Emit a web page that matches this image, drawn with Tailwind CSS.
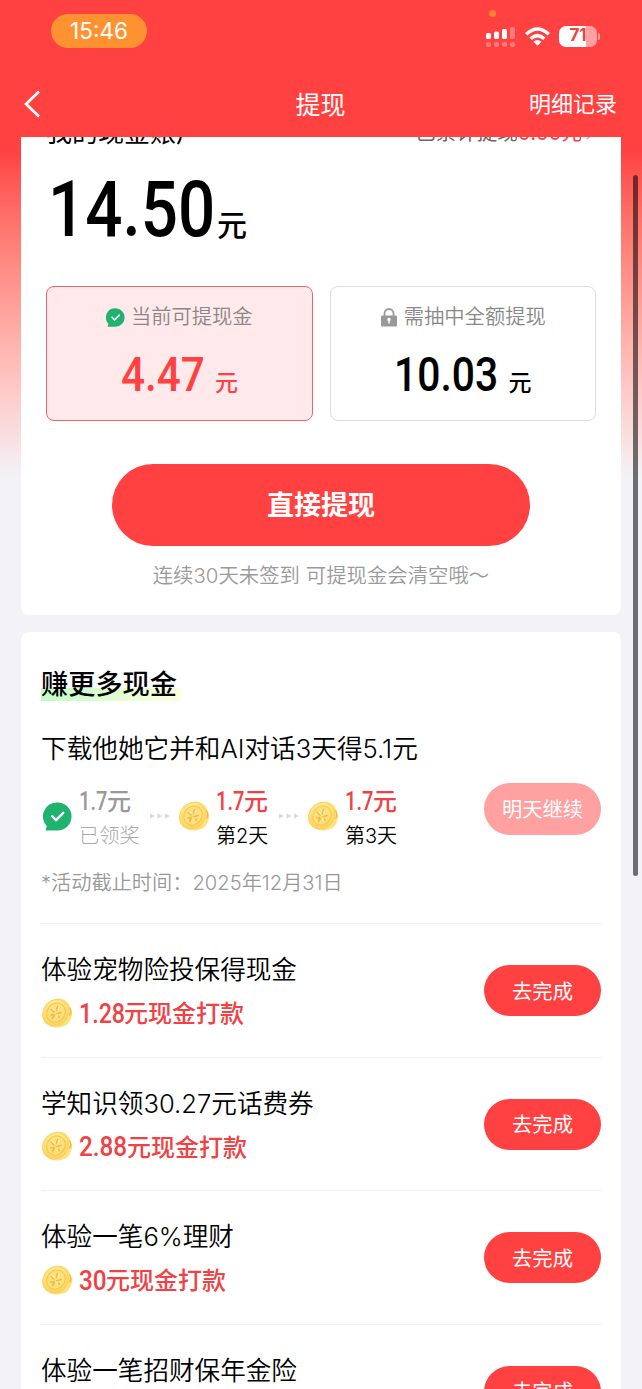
<!DOCTYPE html>
<html lang="zh-CN">
<head>
<meta charset="utf-8">
<meta name="viewport" content="width=device-width">
<title>提现</title>
<script src="https://cdn.jsdelivr.net/npm/@tailwindcss/browser@4"></script>
</head>
<body class="h-[1389px] w-[642px] overflow-hidden bg-[#f3f2f7] font-['Inter','Noto_Sans_CJK_SC',sans-serif] text-black">
<svg class="absolute size-0" aria-hidden="true">
  <defs>
    <linearGradient id="gold" x1="0" y1="0" x2="1" y2="1"><stop offset="0" stop-color="#fff0a4"/><stop offset=".5" stop-color="#ffdc6c"/><stop offset="1" stop-color="#f9cf5b"/></linearGradient>
    <symbol id="coin" viewBox="0 0 32 32">
      <path d="M10 4C16-.5 24 1 28 7c1 2 .8 3 2.200 5.500C32.500 17 30 21 29 24 26 28 24 29 20 30 12 32 5 28 2 22Z" fill="#ffe07a"/>
      <path d="M28.500 10.500q2.500 4 0 8" stroke="#eebb45" stroke-width="1.400" fill="none"/>
      <ellipse cx="14.500" cy="15.800" rx="12.300" ry="13.800" transform="rotate(38 14.500 15.800)" fill="url(#gold)" stroke="#f9d160" stroke-width="1"/>
      <ellipse cx="15" cy="15.500" rx="8.800" ry="10" transform="rotate(38 15 15.500)" fill="#ffe07c" stroke="#f3c552" stroke-width="1"/>
      <path d="m10.500 12.500 2.500 2.500m3.500-5.500-1 4m-5.500 4.500 3-.5m2.500-.5 4.500-1.500m-8.500 6 1.500-3m3-.5 2.500 2.500" stroke="#f0bb42" stroke-width="1.700" stroke-linecap="round" fill="none"/>
      <path d="m11.500 11.500 2.500 2.500m4-4-1 3.500m-1 3.500v4" stroke="#fff3b5" stroke-width="1.300" fill="none"/>
    </symbol>
    <symbol id="done" viewBox="0 0 30 30">
      <path d="M15 .5a14.500 14.500 0 1 1 0 29H3.200q-.9 0-.5-.9l1.300-3.500A14.500 14.500 0 0 1 15 .5Z" fill="#20b26e"/>
      <path d="m9.500 14.700 4 4 7.500-7.500" fill="none" stroke="#fff" stroke-width="2.400" stroke-linecap="round" stroke-linejoin="round"/>
    </symbol>
    <symbol id="arrows" viewBox="0 0 20 6"><path d="M0 .5 5 3 0 5.500ZM7.500.5l5 2.500-5 2.500ZM15 .5 20 3l-5 2.500Z" fill="#d9d9d9"/></symbol>
  </defs>
</svg>

<header class="h-[137px] bg-[#ff4142] text-white">
  <div class="flex h-[72px] items-start pl-[51px] pr-[42px]">
    <div class="mt-3.5 flex h-[34px] w-24 items-center justify-center rounded-full bg-[#ff9230] text-[22.500px]">15:46</div>
    <div class="relative ml-auto flex items-center gap-[9px] pt-[23px]">
      <span class="absolute left-[3px] top-[10px] size-[7px] rounded-full bg-[#ff8231]"></span>
      <svg class="mt-1 h-[22px] w-[30px]" viewBox="0 0 30 22" fill="#fff"><rect y="6" width="5" height="6" rx="1.500"/><rect x="8" y="4.500" width="5" height="7.500" rx="1.500"/><rect x="16" y="2" width="5" height="10" rx="1.500"/><g opacity=".3"><rect x="24" width="5" height="12" rx="1.500"/><rect y="15" width="5" height="5" rx="2"/><rect x="8" y="15" width="5" height="5" rx="2"/><rect x="16" y="15" width="5" height="5" rx="2"/><rect x="24" y="15" width="5" height="5" rx="2"/></g></svg>
      <svg class="h-[19px] w-[25px]" viewBox="0 0 25 19"><g fill="none" stroke="#fff" stroke-width="3.500"><path d="M1.200 7.300q11.300-10.600 22.600 0"/><path d="M5.600 11.800q6.900-6.200 13.800 0"/></g><path d="m12.500 18.800-4-4q4-3.400 8 0Z" fill="#fff"/></svg>
      <div class="flex items-center gap-px">
        <div class="flex h-[21px] w-[38px] items-center justify-center rounded-[7px] bg-linear-to-r from-white from-70% to-[#ffa0a1] to-70% font-['Inter'] text-[17px] font-bold text-[#ee4143]">71</div>
        <div class="h-[7px] w-[2px] rounded-r bg-white/50"></div>
      </div>
    </div>
  </div>
  <nav class="grid h-[64px] grid-cols-3 items-center pl-6 pr-[25px]">
    <svg class="h-7 w-4" viewBox="0 0 16 28"><path d="M15 1.500 2 14l13 12.500" fill="none" stroke="#fff" stroke-width="2.800"/></svg>
    <h1 class="pt-px text-center text-[25px] leading-[36px]">提现</h1>
    <div class="text-right text-[22px] leading-8">明细记录</div>
  </nav>
</header>

<main class="h-[1252px] bg-linear-to-b from-[#ff4142] from-[15px] to-[#f3f2f7] to-[340px] px-[21px]">
  <section class="h-[478px] overflow-hidden rounded-b-lg bg-white">
    <div class="-mt-[25px] flex h-10 items-center justify-between pl-[25px] pr-[25px]">
      <h2 class="pt-0.5 text-[26px] leading-10">我的现金账户</h2>
      <div class="flex items-center pt-[3px] text-[20.500px] text-[#666]">已累计提现<span class="text-[#f04145]">0.00元</span><svg class="ml-0.5 size-3" viewBox="0 0 12 12"><path d="m3 1 5 5-5 5" fill="none" stroke="#aaa" stroke-width="1.500"/></svg></div>
    </div>
    <div class="flex h-[134px] items-baseline pl-[27px] pt-[12px]">
      <span class="inline-block w-[169px] origin-left scale-x-[.84] whitespace-nowrap font-['Roboto'] text-[78px] font-medium leading-[92px]">14.50</span><span class="text-[30px] font-medium leading-10">元</span>
    </div>
    <div class="grid h-[135px] grid-cols-2 gap-[17px] px-[25px]">
      <div class="rounded-lg border border-[#e4676d] bg-[#ffe9ea] pt-[14px]">
        <div class="flex h-8 items-center justify-center gap-1.5 pt-px text-[20.300px] font-[350] text-[#888]"><svg class="size-[19px]"><use href="#done"/></svg>当前可提现金</div>
        <div class="flex h-[72px] items-baseline pl-[74px] pt-[14px] text-[#ff4142]"><span class="inline-block w-[94px] origin-left scale-x-[.88] whitespace-nowrap font-['Roboto'] text-[48px] font-medium leading-[56px]">4.47</span><span class="text-[23px] font-medium">元</span></div>
      </div>
      <div class="rounded-lg border border-[#ddd] pt-[14px]">
        <div class="flex h-8 items-center justify-center gap-1.5 pt-px text-[20.300px] font-[350] text-[#888]"><svg class="h-[19px] w-[18px]" viewBox="0 0 18 19"><path d="M4.500 9V5.500a4.500 4.500 0 0 1 9 0V9" fill="none" stroke="#999" stroke-width="1.800"/><rect x="1" y="7.500" width="16" height="11" rx="1.200" fill="#999"/><circle cx="9" cy="11.500" r="1.700" fill="#fff"/><path d="M8.300 12h1.400v3.500H8.300z" fill="#fff"/></svg>需抽中全额提现</div>
        <div class="flex h-[72px] items-baseline pl-[63px] pt-[14px]"><span class="inline-block w-[115px] origin-left scale-x-[.85] whitespace-nowrap font-['Roboto'] text-[48px] font-medium leading-[56px]">10.03</span><span class="text-[23px] font-medium">元</span></div>
      </div>
    </div>
    <button class="mx-auto mt-[43px] flex h-[82px] w-[418px] items-center justify-center rounded-full bg-[#ff4142] pt-[3px] text-[27px] font-bold text-white">直接提现</button>
    <p class="mt-[14px] text-center text-[20.400px] font-[350] leading-8 text-[#9a9a9a]">连续30天未签到 可提现金会清空哦～</p>
  </section>

  <section class="mt-[17px] h-[780px] rounded-t-lg bg-white px-5">
    <div class="flex h-[292px] flex-col border-b border-[#f0f0f0] pt-[33px]">
      <h2 class="h-10 w-[140px] bg-linear-to-r from-[#c4fac8] to-[#fbffdc] bg-[length:100%_13px] bg-[position:0_23px] bg-no-repeat text-[27.200px] font-medium leading-10">赚更多现金</h2>
      <h3 class="mt-[24px] h-10 whitespace-nowrap text-[25.650px] font-[350] leading-10">下载他她它并和AI对话3天得5.1元</h3>
      <div class="mt-4 flex h-[64px] items-start">
        <svg class="ml-0.5 mt-[17px] size-[29px]"><use href="#done"/></svg>
        <div class="ml-[7px] w-[60px] whitespace-nowrap"><div class="flex h-[33px] items-center text-[24px] font-medium text-[#999]"><span class="inline-block w-[28px] overflow-visible"><span class="inline-block w-[36px] origin-left scale-x-[.77] font-['Roboto'] text-[26px]">1.7</span></span>元</div><div class="flex h-9 items-center text-[20.300px] font-light text-[#aaa]">已领奖</div></div>
        <svg class="ml-[11px] mt-7 h-1.5 w-5"><use href="#arrows"/></svg>
        <svg class="ml-2 mt-[15px] size-8"><use href="#coin"/></svg>
        <div class="ml-1.5 w-[53px] whitespace-nowrap"><div class="flex h-[33px] items-center text-[24px] font-medium text-[#f04145]"><span class="inline-block w-[28px] overflow-visible"><span class="inline-block w-[36px] origin-left scale-x-[.77] font-['Roboto'] text-[26px]">1.7</span></span>元</div><div class="flex h-9 items-center text-[20px] font-[350]">第2天</div></div>
        <svg class="ml-[10px] mt-7 h-1.5 w-5"><use href="#arrows"/></svg>
        <svg class="ml-2 mt-[15px] size-8"><use href="#coin"/></svg>
        <div class="ml-1.5 w-[53px] whitespace-nowrap"><div class="flex h-[33px] items-center text-[24px] font-medium text-[#f04145]"><span class="inline-block w-[28px] overflow-visible"><span class="inline-block w-[36px] origin-left scale-x-[.77] font-['Roboto'] text-[26px]">1.7</span></span>元</div><div class="flex h-9 items-center text-[20px] font-[350]">第3天</div></div>
        <button class="-mt-[2px] ml-auto flex h-[52px] w-[117px] items-center justify-center rounded-full bg-[#ffa0a1] pt-[3px] text-[20.300px] text-white">明天继续</button>
      </div>
      <p class="mt-[18px] h-8 text-[20.200px] font-[350] leading-8 text-[#999]">*活动截止时间：2025年12月31日</p>
    </div>

    <div class="flex h-[133.500px] items-start justify-between border-b border-[#f0f0f0] pt-[26px]">
      <div><h3 class="h-10 text-[25.600px] font-[350] leading-10">体验宠物险投保得现金</h3><div class="mt-2 flex h-8 items-center text-[24px] font-medium text-[#f04145]"><svg class="-mt-[3px] mr-1.5 size-8"><use href="#coin"/></svg><span class="inline-block w-[45px] origin-left scale-x-[.86] whitespace-nowrap font-['Roboto'] text-[27px]">1.28</span>元现金打款</div></div>
      <button class="mt-[15px] flex h-[51px] w-[117px] items-center justify-center rounded-full bg-[#ff4142] pt-[3px] text-[20.300px] text-white">去完成</button>
    </div>
    <div class="flex h-[133.500px] items-start justify-between border-b border-[#f0f0f0] pt-[26px]">
      <div><h3 class="h-10 text-[25.600px] font-[350] leading-10">学知识领30.27元话费券</h3><div class="mt-2 flex h-8 items-center text-[24px] font-medium text-[#f04145]"><svg class="-mt-[3px] mr-1.5 size-8"><use href="#coin"/></svg><span class="inline-block w-[48px] origin-left scale-x-[.9] whitespace-nowrap font-['Roboto'] text-[27px]">2.88</span>元现金打款</div></div>
      <button class="mt-[15px] flex h-[51px] w-[117px] items-center justify-center rounded-full bg-[#ff4142] pt-[3px] text-[20.300px] text-white">去完成</button>
    </div>
    <div class="flex h-[133.500px] items-start justify-between border-b border-[#f0f0f0] pt-[26px]">
      <div><h3 class="h-10 text-[25.600px] font-[350] leading-10">体验一笔6%理财</h3><div class="mt-2 flex h-8 items-center text-[24px] font-medium text-[#f04145]"><svg class="-mt-[3px] mr-1.5 size-8"><use href="#coin"/></svg><span class="inline-block w-[27px] origin-left scale-x-[.9] whitespace-nowrap font-['Roboto'] text-[27px]">30</span>元现金打款</div></div>
      <button class="mt-[15px] flex h-[51px] w-[117px] items-center justify-center rounded-full bg-[#ff4142] pt-[3px] text-[20.300px] text-white">去完成</button>
    </div>
    <div class="flex items-start justify-between pt-[26px]">
      <h3 class="h-10 text-[25.600px] font-[350] leading-10">体验一笔招财保年金险</h3>
      <button class="mt-[15px] flex h-[51px] w-[117px] items-center justify-center rounded-full bg-[#ff4142] pt-[3px] text-[20.300px] text-white">去完成</button>
    </div>
  </section>
</main>
<div class="absolute left-[633px] top-[175px] h-[701px] w-[5px] rounded-full bg-black/55"></div>
</body>
</html>
